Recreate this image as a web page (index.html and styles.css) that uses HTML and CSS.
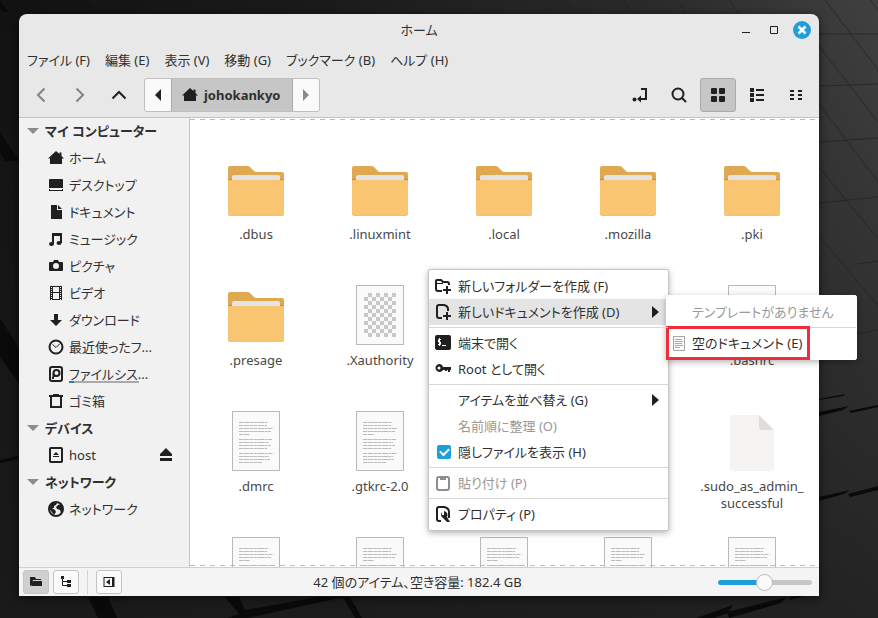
FILE: index.html
```html
<!DOCTYPE html>
<html lang="ja">

<head>
    <meta charset="UTF-8">
    <title>ホーム</title>
    <link rel="stylesheet" href="styles.css">
</head>

<body>
    <svg class="wallpaper" viewBox="0 0 878 618" preserveAspectRatio="none" aria-hidden="true">
        <defs>
            <linearGradient id="wall" x1="0" y1="0" x2="1" y2="0">
                <stop offset="0" stop-color="#121212" />
                <stop offset="0.35" stop-color="#1a1a1a" />
                <stop offset="0.75" stop-color="#2b2b2b" />
                <stop offset="1" stop-color="#404040" />
            </linearGradient>
            <linearGradient id="shade" x1="0" y1="0" x2="0" y2="1">
                <stop offset="0" stop-color="#1c1c1c" stop-opacity="0" />
                <stop offset="0.6" stop-color="#1c1c1c" stop-opacity="0.5" />
                <stop offset="1" stop-color="#1c1c1c" stop-opacity="0.8" />
            </linearGradient>
        </defs>
        <rect width="878" height="618" fill="url(#wall)" />
        <rect width="878" height="618" fill="url(#shade)" />
        <g fill="#0a0a0a">
            <path d="M0 0l8 12H3L0 8zM0 132l19 29H5L0 152zM0 318l19 30v36L0 357zM0 460l19-4v3L0 463z" />
            <path d="M88 597h20l9 21H98zM225 597h14l6 13 73-13h26l-97 21h-20l12-4zM343 597h7l12 21h-7z" />
            <path d="M819 399l26-5-2 2-24 4zM819 412l30-6-6 4-24 6zM849 411l29-6v2l-27 6zM819 497l31-7-6 4-25 7zM848 494l30-8v4l-28 7z" />
            <path d="M696 618l37-13-5 8-14 5zM727 612l60-15-6 6-52 15zM789 600l30-8v-3l-28 8z" />
        </g>
        <g fill="none" stroke="#222" stroke-opacity="0.7">
            <path d="M93 0l8 10M566 0l9 14M623 0l10 14M676 0l10 14M729 0l10 14M825 0l53 70M870 0l8 10" />
            <path d="M819 46l59 76M819 104l59 78M819 167l59 72M819 236l59 70" />
            <path d="M819 34h59M819 86l59-2M819 142l59-4M819 203l59-6M857 264l21-3M847 336l31-6M460 600l7 18" />
        </g>
    </svg>

    <!-- icon set -->
    <svg class="sprite" aria-hidden="true">
        <symbol id="i-home" viewBox="0 0 16 16">
            <path d="M8 1l3.500 3V2.500h2V6L16 8.500H14V14H2V8.500H0z" />
        </symbol>
        <symbol id="i-folder" viewBox="0 0 56 50">
            <path d="M0 2q0-2 2-2h17q3 0 4 2l3 3q1 1 3 1h25q2 0 2 2v10H0z" fill="#e0a850" />
            <path d="M0 15q0-2 2-2h52q2 0 2 2v4H0z" fill="#be8c3c" />
            <path d="M4 11q0-2 2-2h44q2 0 2 2v6H4z" fill="#e4e4e4" />
            <path d="M0 16q0-2 2-2h52q2 0 2 2v32q0 2-2 2H2q-2 0-2-2z" fill="#d5c5aa" />
            <path d="M0 16q0-2 2-2h52q2 0 2 2v31q0 2-2 2H2q-2 0-2-2z" fill="#f9c570" />
        </symbol>
        <symbol id="i-text" viewBox="0 0 48 60">
            <path d="M.5.500h47v59H.500z" fill="#fafafa" stroke="#b8b8b8" />
            <path d="M7 11.500h29M7 14.500h28M7 17.500h34M7 20.500h32M7 23.500h11M7 28.500h33M7 31.500h30M7 34.500h32M7 37.500h28M7 42.500h34M7 45.500h30M7 48.500h31M7 51.500h23" stroke="#bcbcbc" stroke-dasharray="4 .5 6 .5 3 .5" />
        </symbol>
        <pattern id="checks" x="8" y="8" width="8" height="8" patternUnits="userSpaceOnUse">
            <path d="M4 0h4v4H4zM0 4h4v4H0z" fill="#c8c8c8" />
        </pattern>
        <symbol id="i-binary" viewBox="0 0 48 60">
            <path d="M.5.500h47v59H.500z" fill="#fafafa" stroke="#b8b8b8" />
            <path d="M8 8h32v44H8z" fill="url(#checks)" />
        </symbol>
        <symbol id="i-blank" viewBox="0 0 44 56">
            <path d="M3 0h26l15 15v38q0 3-3 3H3q-3 0-3-3V3q0-3 3-3z" fill="#f5f4f2" />
            <path d="M29 0l15 15H32q-3 0-3-3z" fill="#deddda" />
        </symbol>
    </svg>

    <main class="window">
        <header class="titlebar">
            <h1 class="title">ホーム</h1>
            <div class="window-buttons">
                <button aria-label="最小化"><svg viewBox="0 0 18 18"><path d="M5 11h8v1H5z" /></svg></button>
                <button aria-label="最大化"><svg viewBox="0 0 18 18"><path d="M5.500 5.500h7v7h-7z" class="line thin" /></svg></button>
                <button class="close" aria-label="閉じる"><svg viewBox="0 0 18 18"><path d="M5.500 5.500l7 7M12.500 5.500l-7 7" stroke="#fff" stroke-width="2.500" /></svg></button>
            </div>
        </header>

        <nav class="menubar">
            <button>ファイル (F)</button>
            <button>編集 (E)</button>
            <button>表示 (V)</button>
            <button>移動 (G)</button>
            <button>ブックマーク (B)</button>
            <button>ヘルプ (H)</button>
        </nav>

        <div class="toolbar">
            <button class="tool faded" aria-label="戻る"><svg class="icon" viewBox="0 0 16 16"><path d="M11.500 1.500L5 8l6.500 6.500" class="line" /></svg></button>
            <button class="tool faded" aria-label="進む"><svg class="icon" viewBox="0 0 16 16"><path d="M4.500 1.500L11 8l-6.500 6.500" class="line" /></svg></button>
            <button class="tool" aria-label="上へ"><svg class="icon" viewBox="0 0 16 16"><path d="M1.500 11.500L8 5l6.500 6.500" class="line" /></svg></button>
            <div class="pathbar">
                <button class="path-arrow" aria-label="前"><svg class="icon" viewBox="0 0 16 16"><path d="M11 2v12L5 8z" /></svg></button>
                <button class="path-current"><svg class="icon"><use href="#i-home" /></svg>johokankyo</button>
                <button class="path-arrow faded" aria-label="次"><svg class="icon" viewBox="0 0 16 16"><path d="M5 2v12l6-6z" /></svg></button>
            </div>
            <div class="views">
                <button class="tool" aria-label="場所を入力"><svg class="icon" viewBox="0 0 16 16"><path d="M9 2h5v10H7" class="line" /><path d="M5 12l4-3.500v7z" /><circle cx="2.500" cy="12.500" r="2" /></svg></button>
                <button class="tool" aria-label="検索"><svg class="icon" viewBox="0 0 16 16"><circle cx="7" cy="7" r="5.500" class="line" /><path d="M11 11l4 4" class="line" /></svg></button>
                <button class="tool active" aria-label="アイコン表示"><svg class="icon" viewBox="0 0 16 16"><rect x="1" y="1" width="6" height="6" rx="1" /><rect x="9" y="1" width="6" height="6" rx="1" /><rect x="1" y="9" width="6" height="6" rx="1" /><rect x="9" y="9" width="6" height="6" rx="1" /></svg></button>
                <button class="tool" aria-label="リスト表示"><svg class="icon" viewBox="0 0 16 16"><path d="M1 1h4v4H1zM1 6h4v4H1zM1 11h4v4H1zM7 2h8v2H7zM7 7h8v2H7zM7 12h8v2H7z" /></svg></button>
                <button class="tool" aria-label="コンパクト表示"><svg class="icon" viewBox="0 0 16 16"><path d="M2 3h4v2H2zM2 7h4v2H2zM2 11h4v2H2zM10 3h4v2h-4zM10 7h4v2h-4zM10 11h4v2h-4z" /></svg></button>
            </div>
        </div>

        <div class="panes">
            <aside class="sidebar">
                <h2><span class="expander"></span>マイ コンピューター</h2>
                <ul>
                    <li><svg class="icon"><use href="#i-home" /></svg><span>ホーム</span></li>
                    <li><svg class="icon" viewBox="0 0 16 16"><path d="M1 3q0-1 1-1h12q1 0 1 1v8H1zM1 12h14v2H1z" /><path d="M2 12h12v1H2z" fill="#fff" /></svg><span>デスクトップ</span></li>
                    <li><svg class="icon" viewBox="0 0 16 16"><path d="M3 1h6v5h5v9H3zM10 1l4 4h-4z" /></svg><span>ドキュメント</span></li>
                    <li><svg class="icon" viewBox="0 0 16 16"><path d="M4 2h10v10h-2V5H6v8H4z" /><ellipse cx="3.500" cy="13" rx="2.500" ry="2" /><ellipse cx="11" cy="12" rx="2.500" ry="2" /></svg><span>ミュージック</span></li>
                    <li><svg class="icon" viewBox="0 0 16 16"><path d="M2 4h3l1-2h4l1 2h3q1 0 1 1v7q0 1-1 1H2q-1 0-1-1V5q0-1 1-1z" /><circle cx="8" cy="8" r="3" fill="#f1f1f1" /></svg><span>ピクチャ</span></li>
                    <li><svg class="icon" viewBox="0 0 16 16"><path d="M2 1h12v14H2z" /><path d="M5 2h6v5H5zM5 8h6v6H5z" fill="#f1f1f1" /><path d="M3.500 2v13M12.500 2v13" stroke="#f1f1f1" stroke-dasharray="1 1" /></svg><span>ビデオ</span></li>
                    <li><svg class="icon" viewBox="0 0 16 16"><path d="M6 2h4v6h4l-6 6-6-6h4z" /></svg><span>ダウンロード</span></li>
                    <li><svg class="icon" viewBox="0 0 16 16"><circle cx="8" cy="8" r="6.500" class="line" /><path d="M4.500 5.500L8 8.500l4-4" class="line thin" /></svg><span>最近使ったフ...</span></li>
                    <li><svg class="icon" viewBox="0 0 16 16"><rect x="2" y="1" width="12" height="14" rx="2" class="line" /><circle cx="8.500" cy="7" r="3" class="line" /><path d="M4.500 7v4H8zM4 11h2v2H4z" /></svg><span class="disk">ファイルシス...</span></li>
                    <li><svg class="icon" viewBox="0 0 16 16"><path d="M1 2h4V1h6v1h4v2H1z" /><path d="M3 4v10h10V4" class="line" /></svg><span>ゴミ箱</span></li>
                </ul>
                <h2><span class="expander"></span>デバイス</h2>
                <ul>
                    <li><svg class="icon" viewBox="0 0 16 16"><rect x="2" y="1" width="12" height="14" rx="1" class="line" /><path d="M8 5l3 3H5zM5 9h6v1H5z" /></svg><span>host</span><button class="eject" aria-label="取り出す"><svg class="icon" viewBox="0 0 16 16"><path d="M8 1l6 6v2H2V7zM2 11h12v3H2z" /></svg></button></li>
                </ul>
                <h2><span class="expander"></span>ネットワーク</h2>
                <ul>
                    <li><svg class="icon" viewBox="0 0 16 16"><circle cx="8" cy="8" r="7" class="line" /><path d="M2 3l4-2 3 1-1 2-2 1v2H4l3 2 1 2-2 3-3-4-2-3zM10 4l3-1 2 4v4l-2 1-1-3-3-1-1-2z" /></svg><span>ネットワーク</span></li>
                </ul>
            </aside>

            <section class="files">
                <ul class="file-grid">
                    <li><svg class="folder"><use href="#i-folder" /></svg><span>.dbus</span></li>
                    <li><svg class="folder"><use href="#i-folder" /></svg><span>.linuxmint</span></li>
                    <li><svg class="folder"><use href="#i-folder" /></svg><span>.local</span></li>
                    <li><svg class="folder"><use href="#i-folder" /></svg><span>.mozilla</span></li>
                    <li><svg class="folder"><use href="#i-folder" /></svg><span>.pki</span></li>
                    <li><svg class="folder"><use href="#i-folder" /></svg><span>.presage</span></li>
                    <li><svg class="page"><use href="#i-binary" /></svg><span>.Xauthority</span></li>
                    <li class="last-column"><svg class="page"><use href="#i-text" /></svg><span>.bashrc</span></li>
                    <li><svg class="page"><use href="#i-text" /></svg><span>.dmrc</span></li>
                    <li><svg class="page"><use href="#i-text" /></svg><span>.gtkrc-2.0</span></li>
                    <li class="last-column"><svg class="blank"><use href="#i-blank" /></svg><span>.sudo_as_admin_<wbr>successful</span></li>
                    <li><svg class="page"><use href="#i-text" /></svg></li>
                    <li><svg class="page"><use href="#i-text" /></svg></li>
                    <li><svg class="page"><use href="#i-text" /></svg></li>
                    <li><svg class="page"><use href="#i-text" /></svg></li>
                    <li><svg class="page"><use href="#i-text" /></svg></li>
                </ul>
            </section>
        </div>

        <footer class="statusbar">
            <div class="status-buttons">
                <button class="active" aria-label="場所"><svg class="icon" viewBox="0 0 16 16"><path d="M2 3h5l1 2h5v1H5l-1 4-2 2zM5 7h9v5H3z" /></svg></button>
                <button aria-label="ツリー"><svg class="icon" viewBox="0 0 16 16"><path d="M3 2h3v3H3z" /><path d="M4.500 4v7.500H9M4.500 7.500H9" class="line thin" /><path d="M9 6h4v3H9zM9 10h4v3H9z" /></svg></button>
                <span class="divider"></span>
                <button aria-label="サイドバーを隠す"><svg class="icon" viewBox="0 0 16 16"><rect x="3" y="3.500" width="10" height="9" class="line thin" /><path d="M9 5v6L5 8zM11 4h2v8h-2z" /></svg></button>
            </div>
            <span>42 個のアイテム、空き容量: 182.4 GB</span>
            <input class="zoom" type="range" min="0" max="100" value="49" aria-label="拡大率">
        </footer>
    </main>

    <ul class="menu context-menu">
        <li><button><svg class="icon" viewBox="0 0 16 16"><path d="M7 13H3q-2 0-2-2V3q0-1 1-1h4l2 2h4q2 0 2 2v1" class="line" /><path d="M1 5.500h7" class="line thin" /><path d="M12 8v8M8 12h8" class="line" /></svg>新しいフォルダーを作成 (F)</button></li>
        <li class="open">
            <button><svg class="icon" viewBox="0 0 16 16"><path d="M7 14H4q-2 0-2-2V3q0-2 2-2h5q4 1 4 4v2" class="line" /><path d="M12 8v8M8 12h8" class="line" /></svg>新しいドキュメントを作成 (D)<span class="more"></span></button>
            <ul class="menu submenu">
                <li><button disabled><span class="icon"></span>テンプレートがありません</button></li>
                <li class="separator"></li>
                <li class="marked"><button><svg class="icon" viewBox="0 0 16 16"><path d="M2.500 1.500h11v14h-11z" fill="#fafafa" stroke="#a5a5a5" /><path d="M4 4.500h7M4 6.500h8M4 8.500h7M4 10.500h8M4 12.500h5" stroke="#aaa" /></svg>空のドキュメント (E)</button></li>
            </ul>
        </li>
        <li class="separator"></li>
        <li><button><svg class="icon" viewBox="0 0 16 16"><rect width="16" height="15" rx="2" /><path d="M6 4.500H3.500V7h2v2.500H3M4.500 3v8M7 10.500h4" fill="none" stroke="#fff" /></svg>端末で開く</button></li>
        <li><button><svg class="icon" viewBox="0 0 16 16"><path d="M4 3a4 4 0 0 1 4 3h8v3h-1v2h-2V9h-1v1h-2V9H8a4 4 0 1 1-4-6z" /><circle cx="4" cy="7" r="1.500" fill="#fff" /></svg>Root として開く</button></li>
        <li class="separator"></li>
        <li><button><span class="icon"></span>アイテムを並べ替え (G)<span class="more"></span></button></li>
        <li><button disabled><span class="icon"></span>名前順に整理 (O)</button></li>
        <li><label><input type="checkbox" checked>隠しファイルを表示 (H)</label></li>
        <li class="separator"></li>
        <li><button disabled><svg class="icon" viewBox="0 0 16 16"><rect x="2" y="2" width="12" height="13" rx="2" class="line" /><path d="M5 1h6v4H5z" /></svg>貼り付け (P)</button></li>
        <li class="separator"></li>
        <li><button><svg class="icon" viewBox="0 0 16 16"><path d="M6 15H4q-2 0-2-2V3q0-2 2-2h5q5 1 5 5v6" class="line" /><path d="M9 5v4H7V6a4 4 0 0 0 1 6l4 4h3l-3-5a4 4 0 0 0-3-6z" /></svg>プロパティ (P)</button></li>
    </ul>
</body>

</html>
```

FILE: styles.css
```css
*,
*::before,
*::after {
    box-sizing: border-box;
}

body {
    display: flex;
    height: 100vh;
    margin: 0;
    padding: 14px 59px 22px 19px;
    overflow: hidden;
    background-color: #1c1c1c;
    color: #303030;
    font-family: "Noto Sans", "Noto Sans CJK JP", sans-serif;
    font-size: 13px;
    font-feature-settings: "palt";
    line-height: 16px;
}

ul {
    margin: 0;
    padding: 0;
    list-style: none;
}

button {
    padding: 0;
    border: none;
    background: none;
    color: inherit;
    font: inherit;
    font-feature-settings: inherit;
}

svg {
    display: block;
    fill: #202020;
}

.wallpaper {
    position: absolute;
    top: 0;
    left: 0;
    width: 100%;
    height: 100%;
}

.sprite {
    position: absolute;
    width: 0;
    height: 0;
}

.icon {
    flex: none;
    width: 16px;
    height: 16px;
}

.line {
    fill: none;
    stroke: #202020;
    stroke-width: 2;
}

.thin {
    stroke-width: 1;
}

.faded {
    opacity: 0.5;
}

/* window */
.window {
    position: relative;
    display: flex;
    flex: 1;
    flex-direction: column;
    min-width: 0;
    overflow: hidden;
    border-radius: 8px 8px 0 0;
    background-color: #e8e8e8;
    box-shadow: 0 2px 10px rgba(0, 0, 0, 0.6);
}

.titlebar {
    display: grid;
    grid-template-columns: 1fr auto 1fr;
    align-items: center;
    height: 32px;
    padding: 0 8px;
}

.title {
    grid-column: 2;
    margin: 0;
    font-size: 13px;
    font-weight: normal;
}

.window-buttons {
    display: flex;
    justify-content: flex-end;
    gap: 10px;
}

.window-buttons svg {
    width: 18px;
    height: 18px;
}

.close {
    border-radius: 50%;
    background-color: #1f9ede;
}

.menubar {
    display: flex;
    align-items: center;
    gap: 15px;
    height: 28px;
    padding: 0 8px;
}

.toolbar {
    display: flex;
    gap: 3px;
    padding: 4px 5px 5px 4px;
    border-bottom: 1px solid #c4c4c4;
}

.tool {
    display: flex;
    align-items: center;
    justify-content: center;
    width: 36px;
    height: 34px;
    border-radius: 3px;
}

.active {
    border: 1px solid #aaa;
    background-color: #c6c6c6;
}

.pathbar {
    display: flex;
    margin-left: 4px;
    border: 1px solid #c0c0c0;
    border-radius: 3px;
    background-color: #fafafa;
}

.path-arrow {
    padding: 0 5px;
}

.path-current {
    display: flex;
    align-items: center;
    gap: 6px;
    padding: 0 12px 0 10px;
    border: solid #aaa;
    border-width: 0 1px;
    background-color: #c6c6c6;
    font-weight: bold;
}

.views {
    display: flex;
    gap: 3px;
    margin-left: auto;
}

/* sidebar */
.panes {
    display: flex;
    flex: 1;
    min-height: 0;
}

.sidebar {
    width: 171px;
    border-right: 1px solid #c4c4c4;
    background-color: #f1f1f1;
}

.sidebar h2,
.sidebar li {
    display: flex;
    align-items: center;
    height: 27px;
    margin: 0;
}

.sidebar h2 {
    gap: 6px;
    padding: 0 0 2px 8px;
    font-size: 13px;
}

.sidebar li {
    gap: 5px;
    padding: 0 15px 2px 29px;
}

.expander {
    border: solid transparent;
    border-width: 6px 6px 0;
    border-top-color: #8c8c8c;
}

.disk {
    position: relative;
}

.disk::after {
    content: "";
    position: absolute;
    bottom: -1px;
    left: 0;
    width: 70px;
    height: 2px;
    background: linear-gradient(to right, #1f7fb8 5px, #aaa 5px);
}

.eject {
    margin-left: auto;
}

/* file area */
.files {
    position: relative;
    flex: 1;
    overflow: hidden;
    background-color: #fff;
}

.files::before,
.files::after {
    content: "";
    position: absolute;
    right: 0;
    left: 0;
    height: 1px;
    background: repeating-linear-gradient(to right, #bbb 0 5px, transparent 5px 10px);
}

.files::before {
    top: 1px;
}

.files::after {
    bottom: 1px;
}

.file-grid {
    display: grid;
    grid-template-columns: repeat(auto-fill, 124px);
    grid-auto-rows: 126px;
    padding: 39px 0 0 4px;
}

.file-grid li {
    display: flex;
    flex-direction: column;
    align-items: center;
    padding: 0 8px;
    color: #484848;
    line-height: 17px;
    text-align: center;
}

.last-column {
    grid-column: 5;
}

.folder {
    width: 56px;
    height: 50px;
    margin: 9px 0 10px;
}

.page {
    width: 48px;
    height: 60px;
    margin: 2px 0 7px;
}

.blank {
    width: 44px;
    height: 56px;
    margin: 6px 0 7px;
}

/* status bar */
.statusbar {
    display: grid;
    grid-template-columns: 1fr auto 1fr;
    align-items: center;
    height: 29px;
    padding: 0 7px 0 4px;
    border-top: 1px solid #d0d0d0;
    background-color: #f4f4f4;
}

.status-buttons {
    display: flex;
    gap: 4px;
}

.status-buttons button {
    display: flex;
    align-items: center;
    justify-content: center;
    width: 26px;
    height: 24px;
    border: 1px solid #c4c4c4;
    border-radius: 3px;
    background-color: #fafafa;
}

.status-buttons .active {
    background-color: #cfcfcf;
}

.divider {
    width: 1px;
    margin: 0 4px;
    background-color: #d4d4d4;
}

.zoom {
    justify-self: end;
    width: 94px;
    height: 18px;
    margin: 0;
    appearance: none;
    background: none;
}

.zoom::-webkit-slider-runnable-track {
    height: 5px;
    border-radius: 3px;
    background: linear-gradient(to right, #1f9ede 49%, #c6c6c6 49%);
}

.zoom::-webkit-slider-thumb {
    width: 17px;
    height: 17px;
    margin-top: -6px;
    appearance: none;
    border: 1px solid #bbb;
    border-radius: 50%;
    background-color: #fafafa;
}

/* menus */
.menu {
    position: absolute;
    padding: 3px 0;
    border: 1px solid #c4c4c4;
    border-radius: 2px;
    background-color: #fff;
    box-shadow: 0 2px 6px rgba(0, 0, 0, 0.3);
}

.context-menu {
    top: 269px;
    left: 428px;
    width: 241px;
}

.menu li {
    position: relative;
}

.menu button,
.menu label {
    display: flex;
    align-items: center;
    gap: 7px;
    width: 100%;
    height: 26px;
    padding: 0 9px 0 6px;
    white-space: nowrap;
}

.menu button:disabled {
    color: #999;
}

.menu button:disabled svg {
    opacity: 0.5;
}

.open > button {
    background-color: #e4e4e4;
}

.more {
    margin-left: auto;
    border: solid transparent;
    border-width: 6px 0 6px 7px;
    border-left-color: #202020;
}

.menu .separator {
    height: 1px;
    margin: 2px 0;
    background-color: #d8d8d8;
}

.menu input {
    display: flex;
    align-items: center;
    justify-content: center;
    width: 14px;
    height: 14px;
    margin: 0 0 0 2px;
    appearance: none;
    border-radius: 2px;
    background-color: #1f9ede;
}

.menu input:checked::after {
    content: "";
    width: 9px;
    height: 6px;
    margin-bottom: 3px;
    border: solid #fff;
    border-width: 0 0 2px 2px;
    transform: rotate(-45deg);
}

.submenu {
    top: -4px;
    left: 237px;
    width: 191px;
    border-color: #fff;
}

.submenu button {
    gap: 5px;
    padding-left: 4px;
}

/* red outline round the new document entry */
.marked::after {
    content: "";
    position: absolute;
    top: -4px;
    left: -1px;
    width: 144px;
    height: 34px;
    border: 3px solid #ee2f3a;
}
```
